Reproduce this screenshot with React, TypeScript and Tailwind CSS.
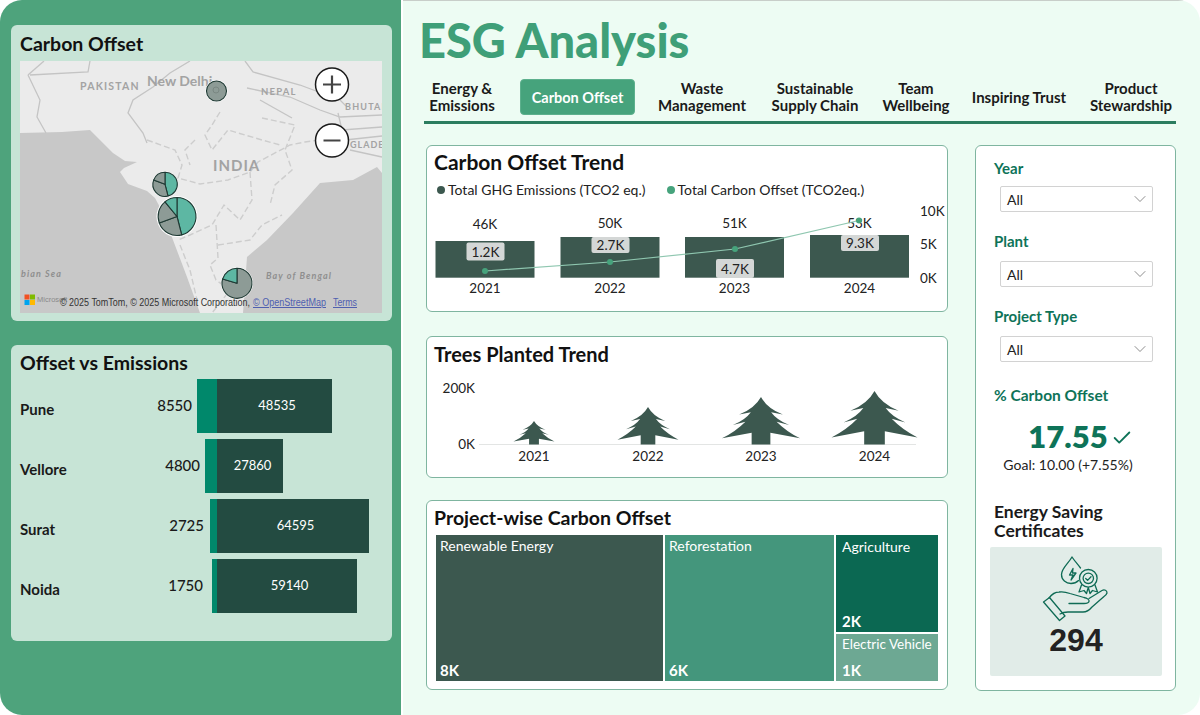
import { Check, ChevronDown } from 'lucide-react'

const tabs = [
  { label: 'Energy &\nEmissions', cls: 'w-[76px]' },
  { label: 'Carbon Offset', cls: 'w-[115px] ml-[20px] h-[36px] text-[14.5px] bg-[#46A37C] text-white rounded-[4px] border border-[#5DB08D]' },
  { label: 'Waste\nManagement', cls: 'w-[104px] ml-[15px]' },
  { label: 'Sustainable\nSupply Chain', cls: 'w-[100px] ml-[11px]' },
  { label: 'Team\nWellbeing', cls: 'w-[82px] ml-[10px]' },
  { label: 'Inspiring Trust', cls: 'w-[104px] ml-[10px]' },
  { label: 'Product\nStewardship', cls: 'w-[90px] ml-[15px]' },
]

const offsetRows = [
  { city: 'Pune', offset: 8550, emis: 48535, teal: 20, dark: 115, mt: 'mt-0', gap: 'mr-[5px]' },
  { city: 'Vellore', offset: 4800, emis: 27860, teal: 12, dark: 66, mt: 'mt-[6px]', gap: 'mr-[5px]' },
  { city: 'Surat', offset: 2725, emis: 64595, teal: 7, dark: 152, mt: 'mt-[6px]', gap: 'mr-[6px]' },
  { city: 'Noida', offset: 1750, emis: 59140, teal: 5, dark: 140, mt: 'mt-[6px]', gap: 'mr-[9px]' },
]

const trendBars = [
  { x: 435.5, y: 241, year: '2021', total: '46K', totalY: 224, chip: '1.2K', chipY: 242.5, chipH: 18, px: 485, py: 271 },
  { x: 560.5, y: 237, year: '2022', total: '50K', totalY: 223, chip: '2.7K', chipY: 237, chipH: 16, px: 610, py: 262 },
  { x: 685, y: 237, year: '2023', total: '51K', totalY: 223, chip: '4.7K', chipY: 259, chipH: 19, px: 735, py: 249 },
  { x: 810, y: 235, year: '2024', total: '53K', totalY: 223, chip: '9.3K', chipY: 235, chipH: 16, px: 859, py: 220.5 },
]

const trees = [
  { cx: 534, top: 421, w: 41, year: '2021' },
  { cx: 648, top: 407, w: 61, year: '2022' },
  { cx: 761, top: 397, w: 78, year: '2023' },
  { cx: 874.5, top: 391, w: 86, year: '2024' },
]

const TREE =
  'M0 0Q8 24 28 37L13 32Q20 48 36 59L20 52Q32 72 50 87L12 75V100H-12V75L-50 87Q-32 72-20 52L-36 59Q-20 48-13 32L-28 37Q-8 24 0 0Z'

function Wedge({ d, fill }: { d: string; fill: string }) {
  return <path d={d} fill={fill} stroke="#1F3A34" strokeWidth="1.1" strokeLinejoin="round" />
}

function IndiaMap() {
  const gray = '#8D9B96'
  const teal = '#5DB7A3'
  return (
    <svg viewBox="20 61 362 252" className="block w-[362px] h-[252px]" fontFamily="Lato, sans-serif">
      <rect x="20" y="61" width="362" height="252" fill="#EBEBEB" />
      <path d="M20 133L62 132 90 130 100 140 113 153 125 161 137 162 124 168 120 172 128 184 147 191 155 198 163 213 173 240 187 277 200 313H20Z" fill="#C8C8C8" />
      <path d="M243 313L247 257 267 240 293 213 320 183 353 180 377 167 382 173V313Z" fill="#C8C8C8" />
      <g fill="none" stroke="#C4C4C4" strokeWidth="1.3">
        <path d="M28 75L40 100 37 117 46 133" />
        <path d="M30 75L88 72 90 61" />
        <path d="M44 61L28 75" />
        <path d="M190 61L170 73 153 87 133 100 128 113 143 133 147 143" />
        <path d="M245 61L253 72 300 85 340 100 346 106" />
        <path d="M247 88L290 97 320 110 340 117 382 115" />
        <path d="M338 113L342 130 382 127M345 140L382 136M350 150L382 157" />
        <path d="M260 100L292 118" />
      </g>
      <g fill="none" stroke="#CDCDCD" strokeWidth="1.4" strokeDasharray="6 3">
        <path d="M147 140L175 150 182 165 178 178 200 184 228 180 250 172 258 162 290 145 305 142 335 138" />
        <path d="M220 112L212 125 205 135 212 150 228 130 245 135 262 140 280 145" />
        <path d="M195 140L185 150 190 165M262 118L295 125 285 150 292 170 275 185 270 205" />
        <path d="M250 172L252 200 240 220 224 205 212 225 190 235 178 240" />
        <path d="M216 225L218 258 210 265 216 280 230 290 212 313" />
        <path d="M218 245L250 240 262 225 282 215" />
        <path d="M180 245L190 270 197 300" />
      </g>
      <g fill="#A3A3A3" fontWeight="700">
        <text x="80" y="90" fontSize="10.5" letterSpacing="1.2">PAKISTAN</text>
        <text x="147" y="86" fontSize="14">New Delhi</text>
        <text x="261" y="95" fontSize="9.5" letterSpacing="1.2">NEPAL</text>
        <text x="345" y="110" fontSize="9" letterSpacing="1.2">BHUTAN</text>
        <text x="350" y="148" fontSize="9" letterSpacing="1">GLADE</text>
        <text x="213" y="171" fontSize="15" letterSpacing="1">INDIA</text>
      </g>
      <g fill="#8F8F8F" fontWeight="700" fontStyle="italic">
        <text x="21" y="277" fontSize="9" letterSpacing="1.1">bian Sea</text>
        <text x="266" y="279" fontSize="9" letterSpacing="1.1">Bay of Bengal</text>
      </g>

      <circle cx="216.5" cy="91" r="11" fill="#FFFFFF" />
      <circle cx="216.5" cy="91" r="10" fill={gray} stroke="#1F3A34" strokeWidth="1.1" />
      <circle cx="216" cy="90" r="3" fill="none" stroke="#7A8782" strokeWidth="1" />

      <circle cx="165" cy="184.3" r="13" fill="#FFFFFF" />
      <Wedge d="M165 184.3L165 172.3A12 12 0 0 1 168 196Z" fill={teal} />
      <Wedge d="M165 184.3L168 196A12 12 0 0 1 153.7 180Z" fill={gray} />
      <Wedge d="M165 184.3L153.7 180A12 12 0 0 1 165 172.3Z" fill={gray} />

      <circle cx="177" cy="216.5" r="20.5" fill="#FFFFFF" />
      <Wedge d="M177 216.5L177 197.5A19 19 0 0 1 181.7 234.9Z" fill={teal} />
      <Wedge d="M177 216.5L181.7 234.9A19 19 0 0 1 159.3 223Z" fill={gray} />
      <Wedge d="M177 216.5L159.3 223A19 19 0 0 1 165 201.8Z" fill={gray} />
      <Wedge d="M177 216.5L165 201.8A19 19 0 0 1 177 197.5Z" fill={teal} />

      <circle cx="237" cy="283.3" r="16" fill="#FFFFFF" />
      <Wedge d="M237 283.3L237 268.3A15 15 0 1 1 222.6 279Z" fill={gray} />
      <Wedge d="M237 283.3L222.6 279A15 15 0 0 1 237 268.3Z" fill={teal} />

      <g fill="#FFFFFF" stroke="#1A1A1A" strokeWidth="1.5">
        <circle cx="332" cy="84.5" r="16.5" />
        <circle cx="332" cy="140.5" r="16.5" />
      </g>
      <path d="M323 84.5H341M332 75.5V93.5M323.5 140.5H340.5" stroke="#444444" strokeWidth="2.2" fill="none" />

      <g>
        <rect x="24.5" y="294.5" width="5" height="5" fill="#F25022" />
        <rect x="30" y="294.5" width="5" height="5" fill="#7FBA00" />
        <rect x="24.5" y="300" width="5" height="5" fill="#00A4EF" />
        <rect x="30" y="300" width="5" height="5" fill="#FFB900" />
      </g>
      <text x="37" y="302" fontSize="7.5" fill="#8A8A8A" fontFamily="Liberation Sans, sans-serif">Microsoft</text>
      <g fontSize="10" fontFamily="Liberation Sans, sans-serif">
        <text x="60" y="306" fill="#333333" textLength="190" lengthAdjust="spacingAndGlyphs">© 2025 TomTom, © 2025 Microsoft Corporation,</text>
        <text x="253" y="306" fill="#4F5FB0" textDecoration="underline" textLength="73" lengthAdjust="spacingAndGlyphs">© OpenStreetMap</text>
        <text x="333" y="306" fill="#4F5FB0" textDecoration="underline" textLength="24" lengthAdjust="spacingAndGlyphs">Terms</text>
      </g>
    </svg>
  )
}

function TrendChart() {
  const labels = 'fill-[#222222]'
  return (
    <svg viewBox="427 200 520 100" className="block w-[520px] h-[100px]" fontFamily="Lato, sans-serif" fontSize="13.5">
      {trendBars.map((b) => (
        <g key={b.year}>
          <rect x={b.x} y={b.y} width="99" height={277.7 - b.y} fill="#3C584F" />
          <text x={b.x + 49.5} y={b.totalY + 5} textAnchor="middle" className={labels}>{b.total}</text>
          <text x={b.x + 49.5} y="293" textAnchor="middle" className={labels}>{b.year}</text>
          <rect x={b.x + 31} y={b.chipY} width="38" height={b.chipH} rx="2" fill="#D4D7D6" />
          <text x={b.x + 50} y={b.chipY + b.chipH / 2 + 5} textAnchor="middle" className={labels}>{b.chip}</text>
        </g>
      ))}
      <polyline points={trendBars.map((b) => `${b.px},${b.py}`).join(' ')} fill="none" stroke="#8FC7B0" strokeWidth="1.2" />
      {trendBars.map((b) => (
        <circle key={b.px} cx={b.px} cy={b.py} r="3" fill="#46A37C" />
      ))}
      <text x="920" y="216" className={labels}>10K</text>
      <text x="920" y="249" className={labels}>5K</text>
      <text x="920" y="283" className={labels}>0K</text>
    </svg>
  )
}

function TreesChart() {
  return (
    <svg viewBox="427 370 520 100" className="block w-[520px] h-[100px]" fontFamily="Lato, sans-serif" fontSize="13.5">
      <line x1="479" y1="444.5" x2="916" y2="444.5" stroke="#E3E5E4" strokeWidth="1.2" />
      <text x="475" y="393" textAnchor="end" fill="#222222">200K</text>
      <text x="475" y="449" textAnchor="end" fill="#222222">0K</text>
      {trees.map((t) => (
        <g key={t.year}>
          <path d={TREE} fill="#3C584F" transform={`translate(${t.cx} ${t.top}) scale(${t.w / 100} ${(444.5 - t.top) / 100})`} />
          <text x={t.cx} y="461" textAnchor="middle" fill="#222222">{t.year}</text>
        </g>
      ))}
    </svg>
  )
}

function CertificateIcon() {
  return (
    <svg viewBox="0 0 100 75" className="block w-[100px] h-[75px]" fill="none" stroke="#0F6B55" strokeWidth="1.3" strokeLinejoin="round" strokeLinecap="round">
      <path d="M46 7C42 14 35.5 18.5 35.5 24.5C35.5 30 40 33.5 45 33.5C48 33.5 50.5 32.5 52.5 30.5M46 7C49 11.5 52 14.5 54.5 18" />
      <path d="M47 18.5L43.5 25H47L45 30L50 23H46.5Z" />
      <circle cx="62.3" cy="28.3" r="8.8" />
      <circle cx="62.3" cy="28.3" r="5.2" />
      <path d="M59.7 28.5L61.6 30.4L65 26.8" />
      <path d="M55.5 35L53 42L58 40.5L60.5 43.5L62.3 37.5L64 43.5L66.5 40.5L71.5 42L69 35" />
      <path d="M23 48C26 44 29 42 33 42C36 41.5 40 42 44 43.5L58 47.5C61.5 48 63.5 50 63 51.5C62.5 53 60.5 53.5 58 53.5H43" />
      <path d="M63 48.5L76 40.5C78.5 39 81 40.5 81 43C80.5 44.5 79.5 45.5 78 46.5L66 57C63.5 60 61 62 57 62H42C39 62 36.5 62.5 34 64" />
      <path d="M17.5 52L23.5 47.5L39 66L33.5 70.5Z" />
    </svg>
  )
}

function Filter({ label, cls, gap }: { label: string; cls: string; gap: string }) {
  return (
    <div className={cls}>
      <div className="pl-[18px] text-[15px] leading-[18px] font-bold text-[#0E7358]">{label}</div>
      <div className={`${gap} ml-[24px] w-[153px] h-[26px] bg-white border border-[#D2D2D2] rounded-[2px] flex items-center justify-between pl-[6px] pr-[2px] text-[14px] text-[#222222]`}>
        <span>All</span>
        <ChevronDown size={20} strokeWidth={0.9} className="text-[#666666]" />
      </div>
    </div>
  )
}

export default function App() {
  return (
    <div className="w-[1200px] h-[715px] bg-white font-['Lato',sans-serif] overflow-hidden">
      <div className="w-full h-full flex rounded-[22px] overflow-hidden">
        <aside className="w-[401px] shrink-0 bg-[#4EA37C] pl-[11px] pr-[9px] pt-[25px]">
          <section className="h-[296px] bg-[#C7E4D6] rounded-[6px] pl-[9px] pt-[7px]">
            <h2 className="text-[19.5px] leading-[24px] font-bold text-[#111111]">Carbon Offset</h2>
            <div className="mt-[5px]">
              <IndiaMap />
            </div>
          </section>
          <section className="mt-[24px] h-[296px] bg-[#C7E4D6] rounded-[6px] pt-[6px]">
            <h2 className="pl-[9px] text-[19.5px] leading-[24px] font-bold text-[#111111]">Offset vs Emissions</h2>
            <div className="mt-[4px]">
              {offsetRows.map((r) => (
                <div key={r.city} className={`flex h-[54px] ${r.mt}`}>
                  <div className="w-[206px] pl-[9px] flex items-center justify-between">
                    <span className="text-[15px] font-bold text-[#1A1A1A] translate-y-[3px]">{r.city}</span>
                    <div className="flex items-center h-full">
                      <span className={`text-[15px] font-medium text-[#1A1A1A] -translate-y-[1px] ${r.gap}`}>{r.offset}</span>
                      <div className="h-full bg-[#00886B]" style={{ width: r.teal }} />
                    </div>
                  </div>
                  <div className="h-full bg-[#234B41] flex items-center justify-center pl-[5px] text-[13px] text-white" style={{ width: r.dark }}>
                    {r.emis}
                  </div>
                </div>
              ))}
            </div>
          </section>
        </aside>

        <main className="flex-1 ml-[2px] bg-[#EDFCF3] pl-[16px] pr-[24px] pt-[13px] shadow-[inset_0_1px_0_#C8CEC9]">
          <h1 className="text-[47px] leading-[54px] font-black text-[#3F9F78]">ESG Analysis</h1>
          <nav className="ml-[5px] mt-[12px] h-[36px] pb-[6px] border-b-[3px] border-[#2B7D5F] box-content flex items-center text-[15px] leading-[17px] font-bold text-[#1A1A1A]">
            {tabs.map((t) => (
              <div key={t.label} className={`shrink-0 flex items-center justify-center text-center whitespace-pre-line ${t.cls}`}>
                {t.label}
              </div>
            ))}
          </nav>

          <div className="mt-[21px] ml-[7px] flex">
            <div className="w-[522px] shrink-0">
              <section className="h-[167px] bg-white rounded-[6px] border border-[#7FB5A0] pt-[4px]">
                <h2 className="pl-[7px] text-[21px] leading-[24px] font-bold text-[#111111]">Carbon Offset Trend</h2>
                <div className="mt-[7px] pl-[10px] flex items-center text-[14px] leading-[18px] text-[#222222]">
                  <span className="w-[8px] h-[8px] rounded-full bg-[#3C584F]" />
                  <span className="ml-[3px]">Total GHG Emissions (TCO2 eq.)</span>
                  <span className="ml-[21px] w-[8px] h-[8px] rounded-full bg-[#46A37C]" />
                  <span className="ml-[3px]">Total Carbon Offset (TCO2eq.)</span>
                </div>
                <div className="mt-[1px]">
                  <TrendChart />
                </div>
              </section>

              <section className="mt-[24px] h-[142px] bg-white rounded-[6px] border border-[#7FB5A0] pt-[5px]">
                <h2 className="pl-[7px] text-[20px] leading-[24px] font-bold text-[#111111]">Trees Planted Trend</h2>
                <div className="mt-[4px]">
                  <TreesChart />
                </div>
              </section>

              <section className="mt-[22px] h-[190px] bg-white rounded-[6px] border border-[#7FB5A0] pt-[5px]">
                <h2 className="pl-[7px] text-[19.5px] leading-[24px] font-bold text-[#111111]">Project-wise Carbon Offset</h2>
                <div className="mt-[5px] ml-[9px] w-[502px] h-[146px] flex gap-[2px] text-white text-[14px] leading-[17px]">
                  <div className="w-[227px] bg-[#3C584F] flex flex-col justify-between pl-[4px] pt-[2px] pb-[2px]">
                    <span>Renewable Energy</span>
                    <span className="text-[15px] font-bold">8K</span>
                  </div>
                  <div className="w-[169px] bg-[#44967C] flex flex-col justify-between pl-[4px] pt-[2px] pb-[2px]">
                    <span>Reforestation</span>
                    <span className="text-[15px] font-bold">6K</span>
                  </div>
                  <div className="w-[102px] flex flex-col gap-[2px]">
                    <div className="h-[97px] bg-[#0B6852] flex flex-col justify-between pl-[6px] pt-[3px] pb-[2px]">
                      <span>Agriculture</span>
                      <span className="text-[15px] font-bold">2K</span>
                    </div>
                    <div className="flex-1 bg-[#6DA893] flex flex-col justify-between pl-[6px] pt-[2px] pb-[2px]">
                      <span className="whitespace-nowrap text-[13.5px]">Electric Vehicle</span>
                      <span className="text-[15px] font-bold">1K</span>
                    </div>
                  </div>
                </div>
              </section>
            </div>

            <section className="ml-[27px] w-[201px] h-[546px] bg-white rounded-[6px] border border-[#7FB5A0] pt-[13px] shrink-0">
              <Filter label="Year" cls="mt-0" gap="mt-[9px]" />
              <Filter label="Plant" cls="mt-[20px]" gap="mt-[11px]" />
              <Filter label="Project Type" cls="mt-[20px]" gap="mt-[11px]" />
              <div className="mt-[24px] pl-[18px] text-[15.5px] leading-[18px] font-bold text-[#0E7358]">% Carbon Offset</div>
              <div className="mt-[11px] flex items-center justify-center pl-[10px] h-[42px]">
                <span className="text-[31px] leading-[42px] font-extrabold text-[#0E7358]">17.55</span>
                <Check size={22} strokeWidth={2} className="ml-[3px] mt-[4px] text-[#0E7358]" />
              </div>
              <div className="-mt-[2px] pr-[15px] text-center text-[14px] leading-[20px] text-[#222222]">Goal: 10.00 (+7.55%)</div>
              <div className="mt-[27px] pl-[18px] text-[17.5px] leading-[19px] font-bold text-[#1A1A1A]">
                Energy Saving
                <br />
                Certificates
              </div>
              <div className="mt-[7px] ml-[14px] w-[172px] h-[129px] bg-[#E1ECE8] rounded-[2px] flex flex-col items-center pt-[3px]">
                <CertificateIcon />
                <div className="-mt-[3px] font-['Liberation_Sans',sans-serif] text-[32px] leading-[36px] font-bold text-[#222222]">294</div>
              </div>
            </section>
          </div>
        </main>
      </div>
    </div>
  )
}
